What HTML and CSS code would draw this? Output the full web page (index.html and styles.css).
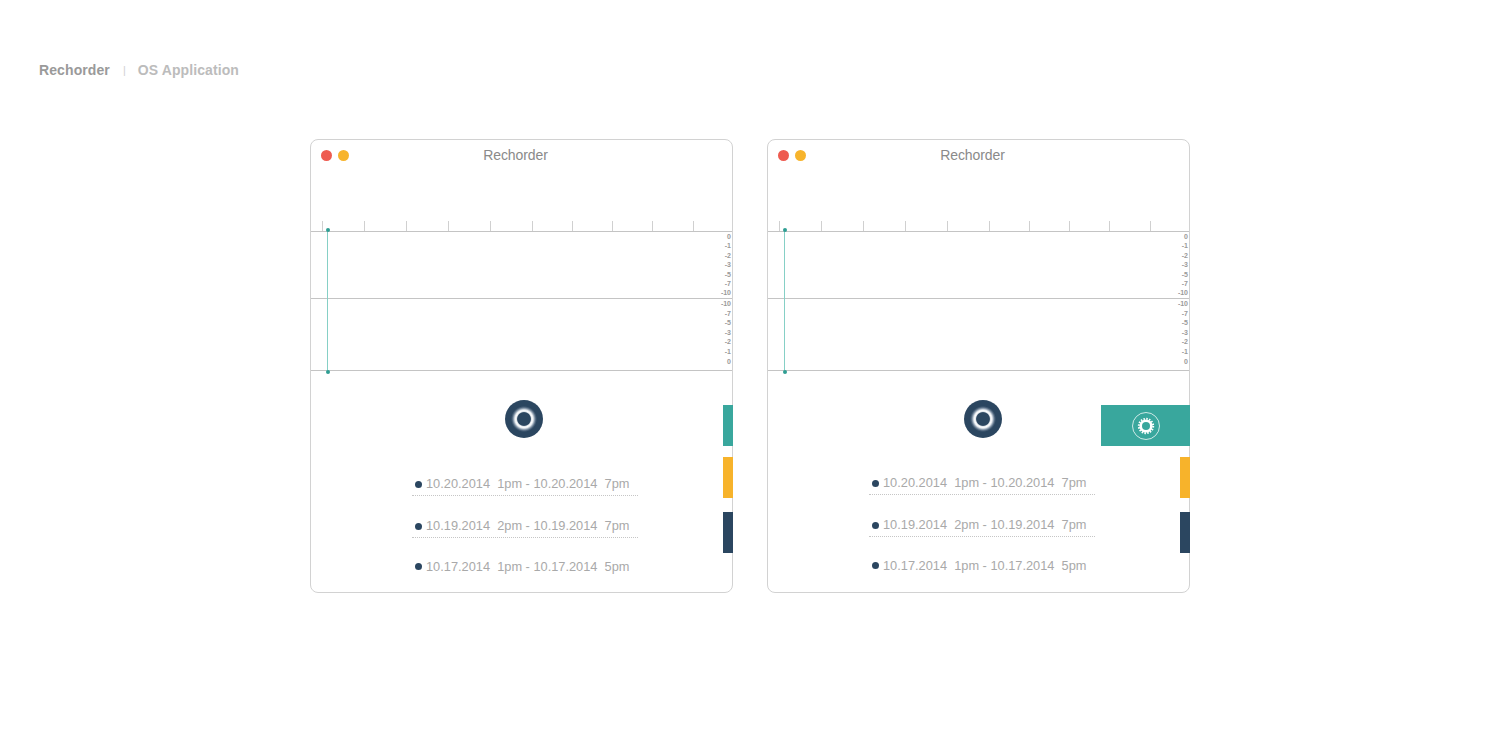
FILE: index.html
```html
<!DOCTYPE html>
<html lang="en">
<head>
<meta charset="utf-8">
<title>Rechorder – OS Application</title>
<link rel="stylesheet" href="styles.css">
</head>
<body>
<div class="page">
  <header class="head">
    <span class="brand">Rechorder</span><span class="sep">|</span><span class="sub">OS Application</span>
  </header>

  <main class="windows">
    <section class="window">
      <div class="titlebar">
        <div class="lights"><span class="light red"></span><span class="light yellow"></span></div>
        <div class="title">Rechorder</div>
      </div>
      <div class="ruler">
        <span class="tick w42"></span><span class="tick w42"></span><span class="tick w42"></span><span class="tick w42"></span><span class="tick w42"></span><span class="tick w40"></span><span class="tick w40"></span><span class="tick w40"></span><span class="tick w41"></span><span class="tick"></span>
      </div>
      <div class="channel ch-top">
        <div class="scale"><span>0</span><span>-1</span><span>-2</span><span>-3</span><span>-5</span><span>-7</span><span>-10</span></div>
      </div>
      <div class="channel ch-bottom">
        <div class="scale"><span>-10</span><span>-7</span><span>-5</span><span>-3</span><span>-2</span><span>-1</span><span>0</span></div>
      </div>
      <div class="playhead"></div>
      <div class="controls">
        <button class="record" aria-label="Record"></button>
        <ul class="list">
          <li class="row"><span class="dot"></span><span class="date">10.20.2014  1pm - 10.20.2014  7pm</span></li>
          <li class="row"><span class="dot"></span><span class="date">10.19.2014  2pm - 10.19.2014  7pm</span></li>
          <li class="row"><span class="dot"></span><span class="date">10.17.2014  1pm - 10.17.2014  5pm</span></li>
        </ul>
      </div>
      <div class="tabs">
        <div class="tab teal"></div>
        <div class="tab yellow"></div>
        <div class="tab navy"></div>
      </div>
    </section>

    <section class="window alt">
      <div class="titlebar">
        <div class="lights"><span class="light red"></span><span class="light yellow"></span></div>
        <div class="title">Rechorder</div>
      </div>
      <div class="ruler">
        <span class="tick w42"></span><span class="tick w42"></span><span class="tick w42"></span><span class="tick w42"></span><span class="tick w42"></span><span class="tick w40"></span><span class="tick w40"></span><span class="tick w40"></span><span class="tick w41"></span><span class="tick"></span>
      </div>
      <div class="channel ch-top">
        <div class="scale"><span>0</span><span>-1</span><span>-2</span><span>-3</span><span>-5</span><span>-7</span><span>-10</span></div>
      </div>
      <div class="channel ch-bottom">
        <div class="scale"><span>-10</span><span>-7</span><span>-5</span><span>-3</span><span>-2</span><span>-1</span><span>0</span></div>
      </div>
      <div class="playhead"></div>
      <div class="controls">
        <button class="record" aria-label="Record"></button>
        <ul class="list">
          <li class="row"><span class="dot"></span><span class="date">10.20.2014  1pm - 10.20.2014  7pm</span></li>
          <li class="row"><span class="dot"></span><span class="date">10.19.2014  2pm - 10.19.2014  7pm</span></li>
          <li class="row"><span class="dot"></span><span class="date">10.17.2014  1pm - 10.17.2014  5pm</span></li>
        </ul>
      </div>
      <div class="tabs">
        <div class="tab teal open">
          <svg class="gear" width="30" height="30" viewBox="0 0 30 30" aria-hidden="true">
            <circle cx="15" cy="15" r="13.5" fill="none" stroke="#ffffff" stroke-opacity="0.75" stroke-width="1"/>
            <circle cx="15" cy="15" r="7.2" fill="none" stroke="#ffffff" stroke-width="2" stroke-dasharray="1.5 1.33"/>
            <circle cx="15" cy="15" r="6.6" fill="#ffffff"/>
            <circle cx="15" cy="15" r="4" fill="#39a79d"/>
          </svg>
        </div>
        <div class="tab yellow"></div>
        <div class="tab navy"></div>
      </div>
    </section>
  </main>
</div>
</body>
</html>
```

FILE: styles.css
```css
* { box-sizing: border-box; }

html, body {
  margin: 0;
  padding: 0;
  background: #ffffff;
}

body {
  font-family: "Liberation Sans", Arial, sans-serif;
  color: #999999;
}

.page {
  padding-top: 62px;
}

/* header */
.head {
  padding-left: 39px;
  font-size: 14px;
  line-height: 17px;
  font-weight: bold;
}
.brand { color: #9a9a9a; letter-spacing: 0.1px; }
.sep {
  color: #d2d2d2;
  font-weight: normal;
  font-size: 11px;
  margin: 0 12px 0 13px;
  position: relative;
  top: -1px;
}
.sub { color: #bcbcbc; letter-spacing: 0.1px; }

/* windows */
.windows {
  display: flex;
  justify-content: center;
  gap: 34px;
  margin-top: 59px;
}

.window {
  position: relative;
  width: 423px;
  height: 454px;
  border: 1px solid #d2d2d2;
  border-radius: 8px;
  display: flex;
  flex-direction: column;
}

.titlebar {
  height: 30px;
  padding: 0 10px;
  display: flex;
  align-items: center;
}
.lights {
  width: 28px;
  display: flex;
  gap: 6px;
}
.light {
  width: 11px;
  height: 11px;
  border-radius: 50%;
}
.light.red { background: #ee5b50; }
.light.yellow { background: #f7b42c; }
.title {
  flex: 1;
  text-align: center;
  padding-right: 40px;
  font-size: 14px;
  color: #8a8a8a;
  letter-spacing: -0.1px;
}

/* ruler */
.ruler {
  height: 61px;
  display: flex;
  align-items: flex-end;
  padding-left: 11px;
}
.tick {
  height: 10px;
  border-left: 1px solid #d0d0d0;
  width: 1px;
}
.tick.w42 { width: 42px; }
.tick.w41 { width: 41px; }
.tick.w40 { width: 40px; }

/* channels */
.channel {
  border-top: 1px solid #c4c4c4;
  display: flex;
  justify-content: flex-end;
}
.ch-top { height: 67px; }
.ch-bottom {
  height: 73px;
  border-bottom: 1px solid #c4c4c4;
}
.scale {
  display: flex;
  flex-direction: column;
  align-items: flex-end;
  padding-right: 1px;
  font-size: 7px;
  font-weight: bold;
  color: #9a9a9a;
}
.ch-top .scale { line-height: 9.4px; }
.ch-bottom .scale { line-height: 9.6px; }

/* playhead overlay */
.playhead {
  position: absolute;
  left: 16px;
  top: 89px;
  width: 1px;
  height: 144px;
  background: #86d0c6;
}
.playhead::before,
.playhead::after {
  content: "";
  position: absolute;
  left: -1.5px;
  width: 4px;
  height: 4px;
  border-radius: 50%;
  background: #2f9e93;
}
.playhead::before { top: -1px; }
.playhead::after { bottom: -1px; }

/* controls */
.controls {
  display: flex;
  flex-direction: column;
}
.record {
  margin: 29px 0 0 194px;
  width: 38px;
  height: 38px;
  padding: 0;
  border: none;
  border-radius: 50%;
  background: radial-gradient(circle at center,
    #2b4660 0, #2b4660 6.4px,
    #dfe5eb 7.4px, #ffffff 8.2px, #e4e9ee 9.2px,
    #8a9bad 10.6px, #4b627a 11.8px, #2b4660 13px, #2b4660 100%);
}

.list {
  list-style: none;
  margin: 16px 0 0 101px;
  padding: 0;
  width: 226px;
}
.row {
  height: 42px;
  padding: 22px 0 3px 3px;
  border-bottom: 1px dotted #c6c6c6;
  display: flex;
  align-items: center;
  gap: 4px;
  font-size: 12.8px;
  line-height: 16px;
  color: #a9a9a9;
}
.row:last-child { border-bottom: none; height: 40px; padding-top: 20px; }
.dot {
  width: 7px;
  height: 7px;
  border-radius: 50%;
  background: #2b4660;
  flex: none;
}
.date { white-space: pre; }

/* second window slight offsets */
.window.alt .record { margin-left: 196px; }
.window.alt .list { margin-top: 15px; }

/* side tabs */
.tabs {
  position: absolute;
  right: -1px;
  top: 265px;
  display: flex;
  flex-direction: column;
  align-items: flex-end;
}
.tab {
  width: 10px;
  height: 41px;
}
.tab.teal { background: #39a79d; }
.tab.yellow { background: #f7b32b; margin-top: 11px; }
.tab.navy { background: #2b4660; margin-top: 14px; }
.tab.open {
  width: 89px;
  display: flex;
  align-items: center;
  justify-content: center;
}
.gear { display: block; }
```
